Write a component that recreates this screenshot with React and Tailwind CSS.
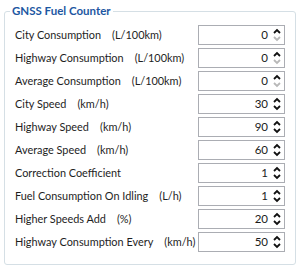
import React from 'react'

const rows = [
  { label: 'City Consumption', unit: '(L/100km)', value: 0 },
  { label: 'Highway Consumption', unit: '(L/100km)', value: 0 },
  { label: 'Average Consumption', unit: '(L/100km)', value: 0 },
  { label: 'City Speed', unit: '(km/h)', value: 30 },
  { label: 'Highway Speed', unit: '(km/h)', value: 90 },
  { label: 'Average Speed', unit: '(km/h)', value: 60 },
  { label: 'Correction Coefficient', unit: '', value: 1 },
  { label: 'Fuel Consumption On Idling', unit: '(L/h)', value: 1 },
  { label: 'Higher Speeds Add', unit: '(%)', value: 20 },
  { label: 'Highway Consumption Every', unit: '(km/h)', value: 50 },
]

const Chevron = ({ up, disabled }) => (
  <svg width="8" height="6" viewBox="0 0 8 6" className="block">
    <path
      d={up ? 'M1 5 L4 2 L7 5' : 'M1 1 L4 4 L7 1'}
      fill="none"
      stroke={disabled ? '#b8b8b8' : '#111'}
      strokeWidth="1.8"
    />
  </svg>
)

const Spinner = ({ value }) => (
  <div className="w-[87px] h-[20px] border border-[#abadb3] bg-white flex items-center">
    <span className="flex-1 text-right pr-[4px] text-[11.5px] text-[#1a1a1a]">{value}</span>
    <div className="w-[10px] mr-[2px] flex flex-col items-center gap-[2px]">
      <Chevron up />
      <Chevron disabled={value === 0} />
    </div>
  </div>
)

export default function App() {
  return (
    <div className="w-[300px] h-[270px] bg-white pt-[3px] pl-[4px] overflow-hidden" style={{ fontFamily: 'Lato, "Open Sans", sans-serif' }}>
      <fieldset className="w-[292px] min-w-0 h-[262px] border border-[#d5dfe5] rounded-[3px]">
        <legend className="ml-[5px] px-[2px] text-[11.5px] font-bold text-[#1d57a2] leading-[16px]">GNSS Fuel Counter</legend>
        <div className="grid grid-cols-[1fr_87px] gap-y-[3px] pt-[6px] pl-[10px] pr-[10px]">
          {rows.map((r) => (
            <React.Fragment key={r.label}>
              <div className="text-[10.9px] text-[#1e1e1e] whitespace-nowrap self-center">
                {r.label}
                {r.unit && <span className="ml-[11px]">{r.unit}</span>}
              </div>
              <Spinner value={r.value} />
            </React.Fragment>
          ))}
        </div>
      </fieldset>
    </div>
  )
}
